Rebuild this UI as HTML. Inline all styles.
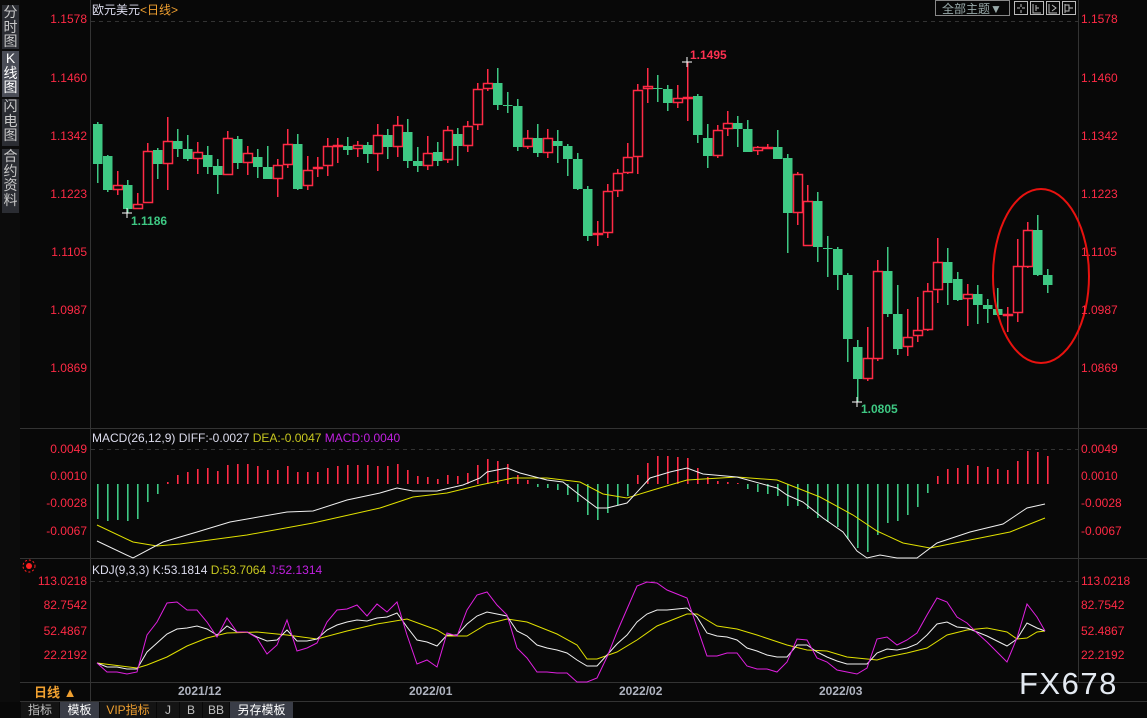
<!DOCTYPE html><html><head><meta charset="utf-8"><style>
body{margin:0;background:#080808;width:1147px;height:718px;overflow:hidden;position:relative;font-family:"Liberation Sans","Noto Sans CJK SC",sans-serif}
.side{position:absolute;left:0;top:0;width:20px;height:702px;background:#0c0c0c}
.sb{position:absolute;left:2px;width:17px;background:#2b2d33;color:#c8c8c8;font-size:14px;line-height:14.5px;text-align:center}
.lab{position:absolute;color:#ff2a45;font-size:12px}
.l{right:1060px;text-align:right}
.r{left:1081px}
.tab{position:absolute;top:702px;height:16px;font-size:12px;line-height:16px;color:#c0c0c0;text-align:center}
</style></head><body>
<div class="side">
<div class="sb" style="top:5px;height:44px">分<br>时<br>图</div>
<div class="sb" style="top:51px;height:46px;background:#4a4d57;color:#fff">K<br>线<br>图</div>
<div class="sb" style="top:99px;height:47px">闪<br>电<br>图</div>
<div class="sb" style="top:149px;height:64px">合<br>约<br>资<br>料</div>
</div>
<svg id="s" width="1147" height="718" style="position:absolute;left:0;top:0">
<line x1="90.5" y1="0" x2="90.5" y2="702" stroke="#333"/>
<line x1="1078.5" y1="0" x2="1078.5" y2="682" stroke="#333"/>
<line x1="20" y1="428.5" x2="1147" y2="428.5" stroke="#333"/>
<line x1="20" y1="558.5" x2="1147" y2="558.5" stroke="#333"/>
<line x1="20" y1="682.5" x2="1147" y2="682.5" stroke="#333"/>
<line x1="20" y1="701.5" x2="1147" y2="701.5" stroke="#333"/>
<line x1="91" y1="21.5" x2="1078" y2="21.5" stroke="#333" stroke-dasharray="4,4"/>
<line x1="91" y1="449.5" x2="1078" y2="449.5" stroke="#333" stroke-dasharray="4,4"/>
<line x1="91" y1="581.5" x2="1078" y2="581.5" stroke="#333" stroke-dasharray="4,4"/>
<g id="g"></g>
<ellipse cx="1041" cy="276" rx="48" ry="87" fill="none" stroke="#e8120f" stroke-width="2"/>
<text x="92" y="14" font-size="12" fill="#dde" font-family="Liberation Sans,Noto Sans CJK SC,sans-serif">欧元美元<tspan fill="#f0a030">&lt;日线&gt;</tspan></text>
<text x="690" y="59" font-size="12" font-weight="bold" fill="#ff3050">1.1495</text>
<text x="131" y="225" font-size="12" font-weight="bold" fill="#3ec883">1.1186</text>
<text x="861" y="413" font-size="12" font-weight="bold" fill="#3ec883">1.0805</text>
<path d="M682 62h10M687 57v10M122 213h10M127 208v10M852 402h10M857 397v10" stroke="#fff"/>
<text x="92" y="442" font-size="12" fill="#dde">MACD(26,12,9) DIFF:-0.0027 <tspan fill="#c8c820">DEA:-0.0047</tspan> <tspan fill="#c020e0">MACD:0.0040</tspan></text>
<text x="92" y="574" font-size="12" fill="#dde">KDJ(9,3,3) K:53.1814 <tspan fill="#c8c820">D:53.7064</tspan> <tspan fill="#c020e0">J:52.1314</tspan></text>
<circle cx="29" cy="566" r="3" fill="#ff2020"/><circle cx="29" cy="566" r="6" fill="none" stroke="#ff2020" stroke-dasharray="2,2"/>
<g font-size="12" font-weight="bold" fill="#b0b4c0"><text x="178" y="695">2021/12</text><text x="409" y="695">2022/01</text><text x="619" y="695">2022/02</text><text x="819" y="695">2022/03</text></g>
<text x="1019" y="694" font-size="31" fill="#e4eaf2" letter-spacing="1.5">FX678</text>
<text x="34" y="697" font-size="13" font-weight="bold" fill="#f0a030" font-family="Liberation Sans,Noto Sans CJK SC,sans-serif">日线 ▲</text>
<rect x="935.5" y="0.5" width="74" height="15" fill="none" stroke="#888"/>
<text x="942" y="13" font-size="12" fill="#9aa" font-family="Liberation Sans,Noto Sans CJK SC,sans-serif">全部主题▼</text>
<g fill="none" stroke="#bbb"><rect x="1014.5" y="1.5" width="13" height="13"/><rect x="1030.5" y="1.5" width="13" height="13"/><rect x="1046.5" y="1.5" width="13" height="13"/><rect x="1062.5" y="1.5" width="13" height="13"/>
<path d="M1021 4v3M1021 10v3M1017 8h3M1022 8h3M1033 4v9h8M1036 5v6M1039 8h-3M1049 4v9h8M1052 5l4 3-4 3M1065 4v9M1065 5h4v6h-4M1069 8h4"/></g>
</svg>
<div class="lab l" style="top:12px">1.1578</div><div class="lab l" style="top:71px">1.1460</div><div class="lab l" style="top:129px">1.1342</div><div class="lab l" style="top:187px">1.1223</div><div class="lab l" style="top:245px">1.1105</div><div class="lab l" style="top:303px">1.0987</div><div class="lab l" style="top:361px">1.0869</div>
<div class="lab r" style="top:12px">1.1578</div><div class="lab r" style="top:71px">1.1460</div><div class="lab r" style="top:129px">1.1342</div><div class="lab r" style="top:187px">1.1223</div><div class="lab r" style="top:245px">1.1105</div><div class="lab r" style="top:303px">1.0987</div><div class="lab r" style="top:361px">1.0869</div>
<div class="lab l" style="top:442px">0.0049</div><div class="lab l" style="top:469px">0.0010</div><div class="lab l" style="top:496px">-0.0028</div><div class="lab l" style="top:524px">-0.0067</div>
<div class="lab r" style="top:442px">0.0049</div><div class="lab r" style="top:469px">0.0010</div><div class="lab r" style="top:496px">-0.0028</div><div class="lab r" style="top:524px">-0.0067</div>
<div class="lab l" style="top:574px">113.0218</div><div class="lab l" style="top:598px">82.7542</div><div class="lab l" style="top:624px">52.4867</div><div class="lab l" style="top:648px">22.2192</div>
<div class="lab r" style="top:574px">113.0218</div><div class="lab r" style="top:598px">82.7542</div><div class="lab r" style="top:624px">52.4867</div><div class="lab r" style="top:648px">22.2192</div>
<div class="tab" style="left:21px;width:38px;background:#141414">指标</div>
<div class="tab" style="left:60px;width:39px;background:#3a3d47;color:#fff">模板</div>
<div class="tab" style="left:100px;width:56px;color:#f0a030;background:#141414">VIP指标</div>
<div class="tab" style="left:157px;width:22px;background:#141414">J</div>
<div class="tab" style="left:180px;width:22px;background:#141414">B</div>
<div class="tab" style="left:203px;width:26px;background:#141414">BB</div>
<div class="tab" style="left:230px;width:63px;background:#3a3d47;color:#fff">另存模板</div>
<script>
var C=[[124,164,122,183,0],[156,190,155,192,0],[185,190,171,195,1],[185,209,180,213,0],[204,209,193,209,1],[151,203,143,203,1],[150,164,148,179,0],[141,164,117,190,1],[141,149,129,157,0],[149,159,135,161,0],[152,159,142,174,1],[155,167,146,174,0],[166,175,159,194,0],[138,175,131,175,1],[139,163,136,169,0],[153,163,146,175,1],[157,167,149,178,0],[167,179,146,179,0],[165,179,159,197,1],[144,165,129,168,1],[144,189,134,190,0],[170,186,156,190,1],[167,169,157,177,1],[146,166,138,176,1],[145,146,138,163,1],[146,150,137,155,0],[145,149,141,157,1],[145,154,142,163,0],[135,154,124,171,1],[135,147,129,159,0],[125,147,116,157,1],[132,161,119,168,0],[161,166,147,172,0],[153,166,136,170,1],[152,161,142,166,0],[130,160,126,163,1],[134,146,128,166,0],[126,146,121,152,1],[89,125,83,130,1],[83,89,69,91,1],[83,105,68,110,0],[105,106,92,113,0],[106,147,99,151,0],[138,147,130,149,1],[138,153,124,157,0],[138,153,129,158,1],[141,146,130,163,0],[146,159,144,176,0],[159,189,153,190,0],[189,236,186,241,0],[233,234,221,246,1],[191,233,184,238,1],[173,191,169,197,1],[157,173,143,174,1],[90,157,84,174,1],[86,89,68,103,1],[88,89,75,102,0],[89,103,85,111,0],[98,103,85,108,1],[97,98,62,121,1],[96,135,94,143,0],[138,156,124,168,0],[130,156,125,158,1],[123,129,111,136,1],[123,129,116,147,0],[129,152,120,152,0],[147,151,146,155,1],[147,148,144,149,1],[147,159,130,159,0],[158,213,154,253,0],[174,213,172,225,1],[201,246,185,246,1],[201,247,192,262,0],[248,249,236,277,0],[249,275,247,290,0],[275,339,273,362,0],[347,379,340,402,0],[358,379,327,381,1],[271,359,260,361,1],[271,314,247,317,0],[314,349,285,355,0],[337,347,309,356,1],[330,336,297,342,1],[291,330,283,331,1],[262,290,238,303,1],[262,283,248,305,0],[279,300,272,301,0],[294,299,284,326,1],[294,305,285,324,0],[305,309,299,323,0],[309,315,288,316,0],[314,315,307,332,1],[266,313,239,322,1],[230,267,222,268,1],[230,275,215,276,0],[275,285,269,293,0]];
var M=[519,521,520,521,519,502,494,482,475,472,469,468,471,465,464,464,466,470,470,466,472,472,472,468,466,465,465,465,466,466,464,470,476,477,479,475,476,473,465,459,461,464,475,480,487,488,490,495,502,515,520,513,505,496,475,463,456,456,457,458,468,477,481,482,483,489,492,494,496,506,506,509,518,522,527,539,548,552,535,523,521,515,507,493,476,469,468,465,466,467,469,470,461,451,452,456];
var h='',R='#ff2a45',G='#3ec883';
C.forEach(function(c,i){var x=97+10*i,col=c[4]?R:G;
h+='<rect x="'+x+'" y="'+c[2]+'" width="1.5" height="'+(c[3]-c[2])+'" fill="'+col+'"/>';
var hh=Math.max(c[1]-c[0],1);
if(c[4])h+='<rect x="'+(x-3.5)+'" y="'+(c[0]+.5)+'" width="9" height="'+Math.max(hh-1,1)+'" fill="#080808" stroke="'+R+'" stroke-width="1.5"/>';
else h+='<rect x="'+(x-4)+'" y="'+c[0]+'" width="9.5" height="'+hh+'" fill="'+G+'"/>';
var m=M[i],t=Math.min(m,484);h+='<rect x="'+x+'" y="'+t+'" width="1.6" height="'+Math.abs(m-484)+'" fill="'+(m<484?R:G)+'"/>';});
function P(a,c){var s='';for(var i=0;i<a.length;i+=2)s+=(i?'L':'M')+a[i]+' '+a[i+1];h+='<path d="'+s+'" fill="none" stroke="'+c+'" stroke-width="1"/>';}
P([97,525,133,542,157,546,180,544,247,535,313,523,380,508,413,497,447,493,480,485,513,478,547,478,580,482,603,494,627,498,653,490,687,480,737,477,777,480,820,497,853,515,877,531,903,543,930,548,970,540,1010,532,1045,518],'#e0e000');
P([97,541,133,558,163,542,197,532,230,522,287,512,313,511,347,500,380,493,397,488,413,491,437,491,463,485,480,478,487,472,507,468,520,473,547,480,563,482,577,493,597,508,607,508,627,503,650,478,670,472,687,468,703,474,737,477,777,488,787,495,803,502,823,518,843,532,857,551,867,558,880,555,897,558,917,558,937,543,970,532,1003,524,1027,508,1045,504],'#f0f0f0');
P([97,663,137,668,147,665,167,657,187,646,207,638,227,633,257,632,287,635,317,639,347,631,377,624,407,619,437,630,447,636,467,636,487,624,507,619,527,622,557,634,577,645,587,659,597,659,617,652,637,640,657,626,677,618,687,614,697,614,717,626,737,629,757,635,787,645,807,650,827,651,847,657,867,659,877,660,887,657,907,653,927,648,947,635,967,630,987,628,1007,632,1017,639,1027,638,1037,632,1045,631],'#e0e000');
P([97,663,107,667,117,667,127,669,137,669,147,652,157,643,167,634,177,629,187,628,197,626,207,629,217,635,227,626,237,632,247,632,257,637,267,641,277,640,287,630,297,641,307,641,317,639,327,630,337,625,347,622,357,620,367,621,377,618,387,617,397,613,407,627,417,640,427,642,437,646,447,635,457,635,467,624,477,616,487,612,497,614,507,616,517,631,527,636,537,645,547,648,557,650,567,653,577,660,587,666,597,666,607,655,617,644,627,635,637,622,647,614,657,610,667,610,677,609,687,608,697,617,707,633,717,636,727,637,737,640,747,648,757,651,767,655,777,657,787,657,797,645,807,645,817,652,827,657,837,661,847,664,857,664,867,664,877,653,887,649,897,650,907,648,917,644,927,635,937,624,947,622,957,627,967,628,977,632,987,636,997,641,1007,646,1017,639,1027,623,1037,628,1045,631],'#f0f0f0');
P([97,663,107,672,117,672,127,674,137,672,147,635,157,622,167,603,177,602,187,610,197,610,207,622,217,637,227,618,237,632,247,632,257,638,267,654,277,645,287,620,297,651,307,648,317,643,327,622,337,610,347,609,357,605,367,616,377,604,387,612,397,602,407,635,417,664,427,660,437,667,447,633,457,636,467,610,477,595,487,592,497,605,507,615,517,648,527,658,537,672,547,672,557,673,567,673,577,682,587,682,597,678,607,657,617,632,627,609,637,586,647,582,657,583,667,590,677,594,687,598,697,627,707,656,717,656,727,653,737,653,747,666,757,669,767,669,777,672,787,662,797,639,807,640,817,658,827,662,837,670,847,672,857,674,867,668,877,639,887,637,897,645,907,640,917,633,927,615,937,598,947,602,957,617,967,623,977,633,987,642,997,652,1007,662,1017,638,1027,604,1037,617,1045,631],'#e020e0');
document.getElementById('g').innerHTML=h;
</script>
</body></html>
